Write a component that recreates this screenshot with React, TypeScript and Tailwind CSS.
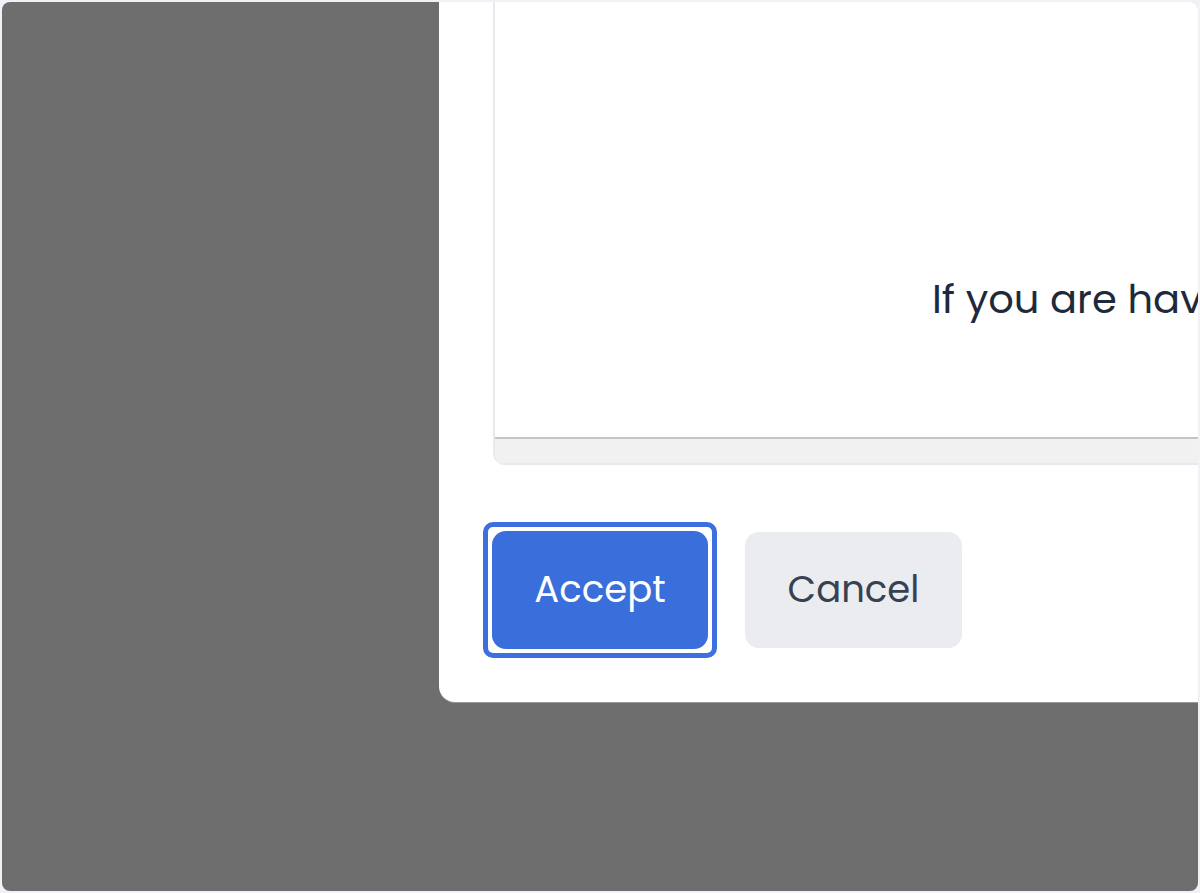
const font = { fontFamily: '"Poppins", "Inter", "Open Sans", sans-serif' };

export default function App() {
  return (
    <div className="w-[1200px] h-[893px] bg-[#f2f1f7] p-[2px]" style={font}>
      <div className="h-full w-full rounded-[8px] bg-[#6e6e6e] overflow-hidden pl-[437px]">
        <div className="h-[700px] w-[900px] bg-white rounded-bl-[16px] shadow-[0_1px_0_#9a9a9a] flex flex-col pl-[54px]">
          {/* content preview box */}
          <div className="h-[463px] flex flex-col border-l-2 border-[#e8e8ee] rounded-bl-[12px] overflow-hidden">
            <div className="flex-1 bg-white flex flex-col justify-end pb-[114px] pl-[437px]">
              <p className="text-[40px] leading-[48px] text-[#1e293b] whitespace-nowrap">
                If you are having trouble viewing this document
              </p>
            </div>
            <div className="h-[2px] bg-[#c4c4c4]" />
            <div className="h-[26px] bg-[#f1f1f1] border-b-2 border-[#e8e8ee]" />
          </div>

          {/* actions */}
          <div className="mt-[57px] -ml-[10px] flex items-center gap-[28px]">
            <div className="rounded-[10px] border-[5px] border-[#3d6fe0] p-[4px] bg-white">
              <button className="w-[216px] h-[118px] rounded-[14px] bg-[#3a6fdb] text-white text-[37px]">
                Accept
              </button>
            </div>
            <button className="w-[217px] h-[116px] rounded-[14px] bg-[#ebecf0] text-[#374151] text-[37px]">
              Cancel
            </button>
          </div>
        </div>
      </div>
    </div>
  );
}
